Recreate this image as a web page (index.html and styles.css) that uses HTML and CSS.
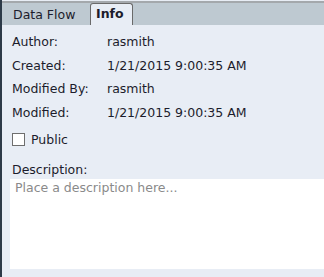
FILE: index.html
```html
<!DOCTYPE html>
<html lang="en">
<head>
    <meta charset="UTF-8">
    <meta name="viewport" content="width=device-width, initial-scale=1.0">
    <title>Properties</title>
    <link rel="stylesheet" href="styles.css">
</head>
<body>
    <div class="panel">
        <div class="tabs">
            <div class="tab">Data Flow</div>
            <div class="tab active">Info</div>
        </div>

        <div class="fields">
            <div class="label">Author:</div>
            <div class="value">rasmith</div>
            <div class="label">Created:</div>
            <div class="value">1/21/2015 9:00:35 AM</div>
            <div class="label">Modified By:</div>
            <div class="value">rasmith</div>
            <div class="label">Modified:</div>
            <div class="value">1/21/2015 9:00:35 AM</div>
        </div>

        <label class="check">
            <span class="box"></span>
            <span>Public</span>
        </label>

        <div class="desc-label">Description:</div>
        <textarea class="desc" placeholder="Place a description here..."></textarea>
    </div>
</body>
</html>
```

FILE: styles.css
```css
body {
    margin: 0;
    width: 324px;
    height: 277px;
    overflow: hidden;
    background: #e8edf5;
}
.panel {
    height: 277px;
    box-sizing: border-box;
    padding-top: 1px;
    border-left: 2px solid #2d3a48;
    background: #e8edf5;
    font-family: "DejaVu Sans", Verdana, sans-serif;
    font-size: 12.5px;
    color: #1c1c2c;
}
.tabs {
    display: flex;
    align-items: flex-end;
    height: 22px;
    background: #bec9d1;
    border-top: 2px solid #a4a8ac;
}
.tab {
    width: 77px;
    height: 21px;
    line-height: 21px;
    padding-left: 11px;
}
.tab.active {
    width: 36px;
    padding-left: 5px;
    border: 1px solid #6a6a6a;
    border-bottom: none;
    border-radius: 3px 3px 0 0;
    background: #e8edf5;
    font-weight: bold;
    line-height: 20px;
}
.fields {
    display: grid;
    grid-template-columns: 95px auto;
    grid-auto-rows: 23.6px;
    align-items: center;
    margin-top: 5px;
    padding-left: 10px;
}
.check {
    display: flex;
    align-items: center;
    gap: 6px;
    height: 24px;
    margin-top: 3px;
    padding-left: 10px;
}
.box {
    width: 11px;
    height: 11px;
    border: 1px solid #6e6e6e;
    background: #fff;
}
.desc-label {
    margin-top: 12px;
    padding-left: 10px;
    line-height: 14px;
}
.desc {
    display: block;
    box-sizing: border-box;
    width: 314px;
    height: 90px;
    margin: 2px 0 0 8px;
    padding: 2px 5px;
    border: none;
    resize: none;
    background: #fff;
    font-family: "DejaVu Sans", Verdana, sans-serif;
    font-size: 12.5px;
    line-height: 14px;
}
.desc::placeholder {
    color: #8a8a8a;
}
```
